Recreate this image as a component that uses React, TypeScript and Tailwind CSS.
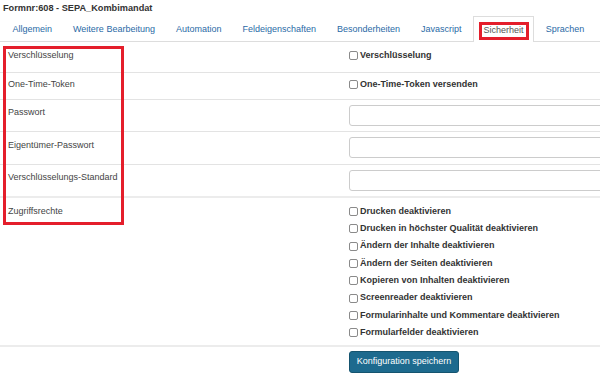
export default function App() {
  const tabs = [
    "Allgemein",
    "Weitere Bearbeitung",
    "Automation",
    "Feldeigenschaften",
    "Besonderheiten",
    "Javascript",
    "Sicherheit",
    "Sprachen",
  ];
  const rights = [
    "Drucken deaktivieren",
    "Drucken in höchster Qualität deaktivieren",
    "Ändern der Inhalte deaktivieren",
    "Ändern der Seiten deaktivieren",
    "Kopieren von Inhalten deaktivieren",
    "Screenreader deaktivieren",
    "Formularinhalte und Kommentare deaktivieren",
    "Formularfelder deaktivieren",
  ];

  const Check = ({ label }: { label: string }) => (
    <label className="flex items-center gap-[2px] h-[17.3px] text-[9px] font-bold text-[#333] whitespace-nowrap">
      <span className="w-[9px] h-[9px] border border-[#8a8a8a] rounded-[2px] bg-white shrink-0" />
      {label}
    </label>
  );

  return (
    <div className="relative w-[600px] h-[380px] bg-white overflow-hidden font-['Liberation_Sans',Arial,sans-serif]">
      <div className="pl-[3px] pt-[3px] h-[16px] text-[9.2px] font-bold text-[#333] leading-[11px]">
        Formnr:608 - SEPA_Kombimandat
      </div>

      {/* Tabs */}
      <div className="flex h-[26px] border-b border-[#ddd] pl-[2px]">
        {tabs.map((t) => (
          <div
            key={t}
            className={
              t === "Sicherheit"
                ? "relative flex items-center pt-[2px] px-[9.5px] mx-[1px] border border-b-0 border-[#ddd] bg-white text-[9px] text-[#555] -mb-px whitespace-nowrap"
                : "flex items-center pt-[2px] px-[10.5px] text-[9px] text-[#2a6aa6] whitespace-nowrap"
            }
          >
            {t}
            {t === "Sicherheit" && (
              <span className="absolute left-[5px] right-[4px] top-[5px] bottom-[2px] border-[3px] border-[#e41e2b]" />
            )}
          </div>
        ))}
      </div>

      {/* Form rows */}
      <div className="grid grid-cols-[349px_1fr] text-[9px] text-[#444]">
        <div className="h-[30px] pl-[8px] pt-[7px]">Verschlüsselung</div>
        <div className="h-[30px] pt-[5px]">
          <Check label="Verschlüsselung" />
        </div>

        <div className="col-span-2 border-t border-[#e3e3e3]" />
        <div className="h-[26px] pl-[8px] pt-[5px]">One-Time-Token</div>
        <div className="h-[26px] pt-[3px]">
          <Check label="One-Time-Token versenden" />
        </div>

        <div className="col-span-2 border-t border-[#e3e3e3]" />
        <div className="h-[31px] pl-[8px] pt-[6px]">Passwort</div>
        <div className="h-[31px] pt-[5px]">
          <div className="w-[260px] h-[21px] border border-[#ccc] rounded-[3px]" />
        </div>

        <div className="col-span-2 border-t border-[#e3e3e3]" />
        <div className="h-[32px] pl-[8px] pt-[7px]">Eigentümer-Passwort</div>
        <div className="h-[32px] pt-[5px]">
          <div className="w-[260px] h-[21px] border border-[#ccc] rounded-[3px]" />
        </div>

        <div className="col-span-2 border-t border-[#e3e3e3]" />
        <div className="h-[31px] pl-[8px] pt-[6px]">Verschlüsselungs-Standard</div>
        <div className="h-[31px] pt-[5px]">
          <div className="w-[260px] h-[21px] border border-[#ccc] rounded-[3px]" />
        </div>

        <div className="col-span-2 border-t-2 border-[#ececec]" />
        <div className="h-[147px] pl-[8px] pt-[7px]">Zugriffsrechte</div>
        <div className="h-[147px] pt-[5px]">
          {rights.map((r) => (
            <Check key={r} label={r} />
          ))}
        </div>

        <div className="col-span-2 border-t-2 border-[#ececec]" />
        <div />
        <div className="pt-[4px]">
          <button className="w-[110px] h-[22px] rounded-[3px] bg-[#1d6a8e] border border-[#15546f] text-white text-[9px]">
            Konfiguration speichern
          </button>
        </div>
      </div>

      {/* annotation */}
      <div className="absolute left-[3px] top-[46px] w-[121px] h-[179px] border-[3px] border-[#e41e2b]" />
    </div>
  );
}
